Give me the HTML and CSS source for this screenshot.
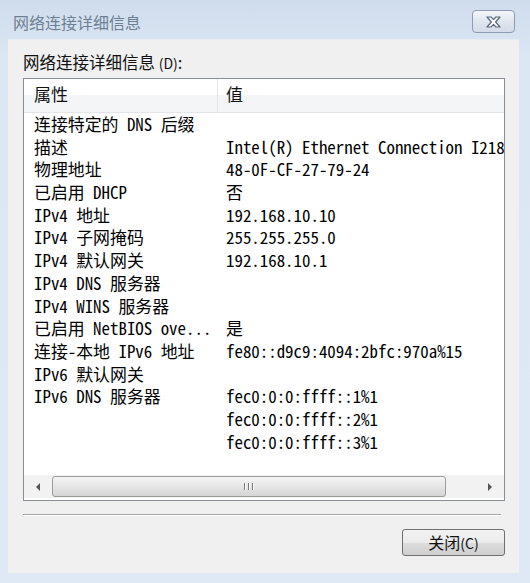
FILE: index.html
```html
<!DOCTYPE html>
<html lang="zh-CN">
<head>
  <meta charset="UTF-8">
  <title>网络连接详细信息</title>
  <link rel="stylesheet" href="styles.css">
</head>
<body>
  <div class="window">
    <div class="title-bar">
      <span class="title">网络连接详细信息</span>
      <button class="close-x" type="button">
        <svg width="17" height="12" viewBox="0 0 17 12">
          <path d="M2 1 L6 1 L8.5 3.6 L11 1 L15 1 L10.6 6 L15 11 L11 11 L8.5 8.4 L6 11 L2 11 L6.4 6 Z" fill="#fff" stroke="#59677b" stroke-width="1.2" stroke-linejoin="round"/>
        </svg>
      </button>
    </div>
    <div class="panel">
      <div class="label">网络连接详细信息 <span class="key">(D)</span>:</div>
      <div class="listbox">
        <div class="list-head">
          <div class="head-cell">属性</div>
          <div class="head-cell">值</div>
        </div>
        <div class="list-body">
          <div class="row"><div class="cell">连接特定的 DNS 后缀</div><div class="cell"></div></div>
          <div class="row"><div class="cell">描述</div><div class="cell">Intel(R) Ethernet Connection I218-V</div></div>
          <div class="row"><div class="cell">物理地址</div><div class="cell">48-0F-CF-27-79-24</div></div>
          <div class="row"><div class="cell">已启用 DHCP</div><div class="cell">否</div></div>
          <div class="row"><div class="cell">IPv4 地址</div><div class="cell">192.168.10.10</div></div>
          <div class="row"><div class="cell">IPv4 子网掩码</div><div class="cell">255.255.255.0</div></div>
          <div class="row"><div class="cell">IPv4 默认网关</div><div class="cell">192.168.10.1</div></div>
          <div class="row"><div class="cell">IPv4 DNS 服务器</div><div class="cell"></div></div>
          <div class="row"><div class="cell">IPv4 WINS 服务器</div><div class="cell"></div></div>
          <div class="row"><div class="cell">已启用 NetBIOS ove...</div><div class="cell">是</div></div>
          <div class="row"><div class="cell">连接-本地 IPv6 地址</div><div class="cell">fe80::d9c9:4094:2bfc:970a%15</div></div>
          <div class="row"><div class="cell">IPv6 默认网关</div><div class="cell"></div></div>
          <div class="row"><div class="cell">IPv6 DNS 服务器</div><div class="cell">fec0:0:0:ffff::1%1</div></div>
          <div class="row"><div class="cell"></div><div class="cell">fec0:0:0:ffff::2%1</div></div>
          <div class="row"><div class="cell"></div><div class="cell">fec0:0:0:ffff::3%1</div></div>
        </div>
        <div class="hscroll">
          <div class="arrow">
            <svg width="6" height="8" viewBox="0 0 6 8"><path d="M5 0 L1 4 L5 8 Z" fill="#555"/></svg>
          </div>
          <div class="track">
            <div class="thumb"><span class="grip"></span><span class="grip"></span><span class="grip"></span></div>
          </div>
          <div class="arrow">
            <svg width="6" height="8" viewBox="0 0 6 8"><path d="M1 0 L5 4 L1 8 Z" fill="#555"/></svg>
          </div>
        </div>
      </div>
      <div class="separator"></div>
      <div class="actions">
        <button class="btn" type="button">关闭<span class="key">(C)</span></button>
      </div>
    </div>
  </div>
</body>
</html>
```

FILE: styles.css
```css
body {
  margin: 0;
  background-color: #dbe6f3;
  font-family: "Noto Sans CJK SC", "Noto Sans", sans-serif;
}
.window {
  width: 530px;
  height: 583px;
  background: linear-gradient(#cfdcec, #dce7f4 60px, #dfe9f5);
  display: flex;
  flex-direction: column;
}
.title-bar {
  height: 39px;
  display: flex;
  align-items: flex-start;
  justify-content: space-between;
  padding: 0 15px 0 13px;
}
.title {
  margin-top: 11px;
  font-size: 16px;
  line-height: 22px;
  color: #6f7f93;
}
.close-x {
  margin-top: 10px;
  width: 43px;
  height: 23px;
  border: 1px solid #8e9bb0;
  border-radius: 4px;
  background: linear-gradient(#f4f7fb, #dfe6ef 50%, #d3dce8);
  display: flex;
  align-items: center;
  justify-content: center;
  padding: 0;
}
.panel {
  margin: 0 11px 10px 8px;
  flex: 1;
  background-color: #f0f0f0;
  border-top: 1px solid #e6ebf1;
  padding: 11px 14px 0 15px;
  display: flex;
  flex-direction: column;
}
.label {
  font-size: 16.5px;
  line-height: 22px;
  color: #111;
  margin-bottom: 4px;
}
.key {
  font-size: 14px;
}
.listbox {
  height: 421px;
  border: 1px solid #8a8e95;
  background-color: #fff;
  display: flex;
  flex-direction: column;
  overflow: hidden;
}
.list-head {
  height: 33px;
  display: grid;
  grid-template-columns: 193px 1fr;
  background: linear-gradient(#ffffff 50%, #f4f5f7 50%);
  border-bottom: 1px solid #e3e5e8;
}
.head-cell {
  font-size: 17px;
  line-height: 30px;
  padding-left: 10px;
  color: #111;
}
.head-cell + .head-cell {
  border-left: 1px solid #e3e5e8;
  padding-left: 8px;
}
.list-body {
  flex: 1;
  font-family: "Noto Sans Mono CJK SC", "Liberation Mono", "Noto Sans CJK SC", monospace;
  font-size: 16.9px;
  color: #000;
}
.row {
  display: grid;
  grid-template-columns: 193px 1fr;
  height: 22.7px;
  line-height: 22.7px;
}
.cell {
  white-space: nowrap;
  padding-left: 10px;
}
.cell + .cell {
  padding-left: 9px;
}
.hscroll {
  height: 23px;
  margin-bottom: 2px;
  display: flex;
  align-items: center;
  background-color: #f2f2f2;
}
.arrow {
  width: 28px;
  height: 23px;
  display: flex;
  align-items: center;
  justify-content: center;
}
.track {
  flex: 1;
  height: 21px;
  padding-right: 8px;
}
.thumb {
  width: 392px;
  height: 19px;
  border: 1px solid #9b9b9b;
  border-radius: 3px;
  background: linear-gradient(#f5f5f5, #e6e6e6 50%, #d4d4d4);
  display: flex;
  align-items: center;
  justify-content: center;
  gap: 2px;
}
.grip {
  width: 1px;
  height: 7px;
  background-color: #777;
  border-right: 1px solid #fff;
}
.separator {
  margin: 13px 4px 0 0;
  height: 1px;
  background-color: #a6a6a6;
  border-bottom: 1px solid #fff;
}
.actions {
  display: flex;
  justify-content: flex-end;
  padding-top: 13px;
}
.btn {
  width: 103px;
  height: 27px;
  border: 1px solid #707070;
  border-radius: 3px;
  background: linear-gradient(#f2f2f2, #ebebeb 50%, #dddddd 50%, #cfcfcf);
  font-family: "Noto Sans CJK SC", sans-serif;
  font-size: 16px;
  color: #111;
  padding: 0;
  line-height: 25px;
}
```
